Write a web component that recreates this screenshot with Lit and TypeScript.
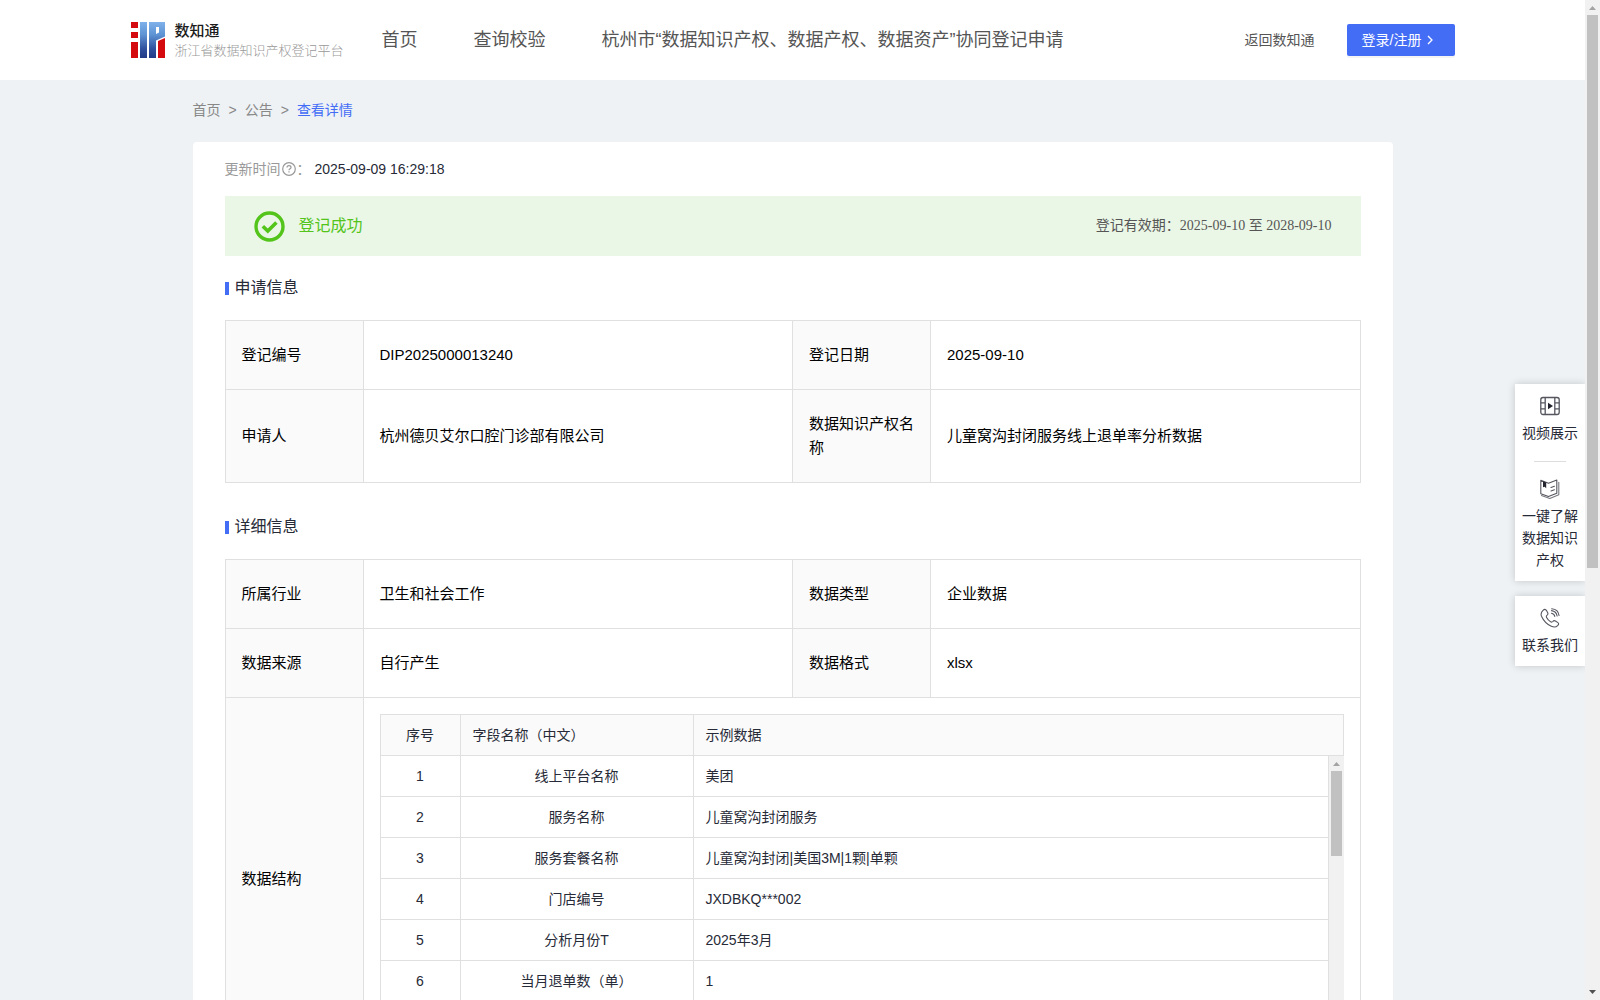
import { LitElement, html, css, svg, nothing } from "lit";
import { customElement } from "lit/decorators.js";
import { styleMap } from "lit/directives/style-map.js";

const navLinks = [
  "首页",
  "查询校验",
  "杭州市“数据知识产权、数据产权、数据资产”协同登记申请",
];

const fields: [string, string][] = [
  ["线上平台名称", "美团"],
  ["服务名称", "儿童窝沟封闭服务"],
  ["服务套餐名称", "儿童窝沟封闭|美国3M|1颗|单颗"],
  ["门店编号", "JXDBKQ***002"],
  ["分析月份T", "2025年3月"],
  ["当月退单数（单）", "1"],
];

const logo = svg`
  <defs>
    <linearGradient id="blue" x1="0" y1="0" x2="0" y2="36" gradientUnits="userSpaceOnUse">
      <stop offset="0" stop-color="#7fb2ea" />
      <stop offset=".35" stop-color="#5e93d4" />
      <stop offset=".75" stop-color="#2f4f9c" />
      <stop offset="1" stop-color="#223b86" />
    </linearGradient>
  </defs>
  <path fill="#d40a0e" d="M0 0h7v6H0zM0 10h7v6H0zM0 20h7v16H0zM27 19l7-3v20h-7z" />
  <path fill="url(#blue)" d="M9 0h7v36H9z" />
  <path fill="url(#blue)" fill-rule="evenodd" d="M18 0h16v14.500l-9 4V36h-7zM25 5v7l3-1.500V5z" />`;

const filmIcon = svg`
  <g fill="none" stroke="#55565f" stroke-width="1.300">
    <rect x=".8" y="1.500" width="18.400" height="17" rx="2.200" />
    <path d="M5.200 1.500v17M14.800 1.500v17M.8 6.800h4.400M.8 12.800h4.400M14.800 6.800h4.400M14.800 12.800h4.400" />
  </g>
  <path fill="#22232d" d="M8 6.800l5 3.200-5 3.200z" />`;

const bookIcon = svg`
  <g fill="none" stroke="#55565f" stroke-width="1.100" stroke-linejoin="round" stroke-linecap="round">
    <path d="M.8 1.200L8.500 4.300 16.800 1v13.200L8.500 17.600.8 14.800z" />
    <path stroke="#77787f" d="M18.800 3.200v12.600L9.800 19.400 1.500 16.600" />
    <path d="M11 8.500l3.400-1.300M11 12l3.400-1.300" />
  </g>
  <path fill="#22232d" d="M3 2.200l3.200 1.300v5.800L4.600 7.800 3 8.300z" />`;

const phoneIcon = svg`
  <g fill="none" stroke="#55565f" stroke-width="1.100" stroke-linecap="round" stroke-linejoin="round">
    <path d="M3 2.400C4.500 1 5.500 1 6.500 2.600l1.200 2.200c.6 1.200.2 1.800-.8 2.600-.8.700-.8 1.200-.3 2.200 1 1.900 2.300 3.200 4 4.200 1 .5 1.500.5 2.200-.3.800-1 1.500-1.200 2.600-.5l2.200 1.400c1.400 1 1.300 1.900 0 3.300-1.500 1.500-3.600 1.800-6.300.6C6.800 16.300 3.400 12.500 1.500 8.300.5 5.800 1.300 4 3 2.400z" />
    <path d="M11.500 5.200c1.900.3 3 1.500 3.300 3.200M11.500 2.600c3 .4 5.100 2.400 5.600 5.400M11.700 .8c4 .3 6.900 3 7.300 6.700" />
  </g>`;

@customElement("side-item")
class SideItem extends LitElement {
  static properties = { icon: { attribute: false }, label: {} };
  declare icon: unknown;
  declare label: string;
  static styles = css`
    :host { display: block; }
    .item {
      display: flex;
      flex-direction: column;
      align-items: center;
      gap: 6px;
      color: #272a37;
      text-decoration: none;
      text-align: center;
    }
    svg { display: block; width: 20px; height: 20px; }
  `;
  render() {
    return html`<a class="item" href="#">
      <svg viewBox="0 0 20 20" aria-hidden="true">${this.icon}</svg>
      <span>${this.label}</span>
    </a>`;
  }
}

/** Vertical scroll bar with arrows; size is the thumb's share of the track in percent. */
@customElement("scroll-rail")
class ScrollRail extends LitElement {
  static properties = { size: { type: Number } };
  declare size: number;
  static styles = css`
    :host { display: block; flex: none; width: 15px; background: #f1f1f1; }
    .rail { display: flex; flex-direction: column; height: 100%; }
    svg { display: block; flex: none; width: 15px; height: 15px; }
    .track { flex: 1; padding: 0 2px; }
    .thumb { background: #c1c1c1; }
  `;
  render() {
    return html`<div class="rail" aria-hidden="true">
      <svg viewBox="0 0 15 15"><path fill="#a3a3a3" d="M4 10l3.500-4L11 10z" /></svg>
      <div class="track"><div class="thumb" style=${styleMap({ height: `${this.size}%` })}></div></div>
      <svg viewBox="0 0 15 15"><path fill="#505050" d="M4 5l3.500 4L11 5z" /></svg>
    </div>`;
  }
}

@customElement("app-root")
class AppRoot extends LitElement {
  static styles = css`
    :host {
      display: flex;
      position: relative;
      height: 100vh;
      overflow: hidden;
      background: #eef2f5;
      color: #272a37;
      font-family: "Liberation Sans", "Noto Sans CJK SC", sans-serif;
      font-size: 14px;
      line-height: 22px;
    }
    * { box-sizing: border-box; }
    a { color: inherit; text-decoration: none; }
    .page { flex: 1; min-width: 0; overflow-y: auto; scrollbar-width: none; }
    .header { background: #fff; }
    .header-inner {
      display: flex;
      align-items: center;
      max-width: 1324px;
      height: 80px;
      margin: 0 auto;
    }
    .brand { display: flex; align-items: center; gap: 10px; }
    .brand svg { width: 34px; height: 36px; }
    .brand-text {
      display: flex;
      flex-direction: column;
      font-family: "Noto Sans CJK SC", sans-serif;
      line-height: 20px;
    }
    .brand-name { color: #1c1c1c; font-size: 15px; font-weight: 500; }
    .brand-sub { color: #999; font-size: 13px; font-weight: 300; white-space: nowrap; }
    .nav {
      display: flex;
      gap: 56px;
      margin-left: 38px;
      color: #555;
      font-size: 18px;
      white-space: nowrap;
    }
    .actions {
      display: flex;
      align-items: center;
      gap: 32px;
      margin-left: auto;
      color: #555;
      white-space: nowrap;
    }
    .login {
      display: flex;
      align-items: center;
      gap: 4px;
      width: 108px;
      height: 32px;
      padding: 0 15px;
      border: 0;
      border-radius: 2px;
      background: #446df6;
      box-shadow: 0 2px 0 rgba(0, 0, 0, 0.045);
      color: #fff;
      font: inherit;
    }
    .login svg { width: 10px; height: 10px; }
    .content { max-width: 1200px; margin: 0 auto; padding-bottom: 40px; }
    .crumbs { display: flex; gap: 8px; padding: 19px 0 21px; color: #888; }
    .crumbs .current { color: #446df6; }
    .card { padding: 16px 32px 32px; border-radius: 4px; background: #fff; }
    .updated { display: flex; align-items: center; color: #999; }
    .updated svg { width: 14px; height: 14px; margin: 0 1px; }
    .updated time { margin-left: 4px; color: #272a37; }
    .banner {
      display: flex;
      align-items: center;
      gap: 14px;
      height: 60px;
      margin-top: 16px;
      padding: 0 29px;
      background: #ebf7e6;
      color: #52c41a;
      font-size: 16px;
    }
    .banner svg { width: 31px; height: 31px; }
    .validity {
      margin-left: auto;
      color: #555;
      font-family: "Liberation Serif", "Noto Sans CJK SC", serif;
      font-size: 14px;
    }
    .title {
      display: flex;
      align-items: center;
      gap: 6px;
      margin: 21px 0;
      font-size: 16px;
      font-weight: 400;
    }
    .title::before { content: ""; width: 4px; height: 13px; background: #446df6; }
    .info + .title { margin-top: 33px; }
    .info, .fields { width: 100%; border-collapse: collapse; table-layout: fixed; }
    .info { color: #000; font-size: 15px; line-height: 24px; }
    .info > tbody > tr > * { padding: 22px 16px; border: 1px solid #e0e0e0; text-align: left; font-weight: 400; }
    .info > tbody > tr > th { background: #fafafa; }
    .info > tbody > tr > .holder { padding: 16px; }
    .key { width: 138px; }
    .fields { color: #272a37; font-size: 14px; line-height: 22px; }
    .fields th, .fields td {
      height: 41px;
      padding: 0 12px;
      border: 1px solid #e0e0e0;
      font-weight: 400;
      text-align: left;
    }
    .fields thead th { background: #fafafa; }
    .fields thead th:first-child, .fields td:nth-child(-n + 2) { text-align: center; }
    .scroller { display: flex; height: 287px; }
    .rows { flex: 1; min-width: 0; overflow-y: auto; scrollbar-width: none; }
    .rows .fields tr:first-child td { height: 40px; border-top: 0; }
    .col-no { width: 80px; }
    .col-name { width: 233px; }
    .side {
      position: absolute;
      top: 384px;
      right: 15px;
      display: flex;
      flex-direction: column;
      gap: 15px;
      width: 70px;
    }
    .side-box {
      padding: 12px 6px 10px;
      background: #fff;
      box-shadow: 0 0 8px rgba(0, 0, 0, 0.18);
      clip-path: inset(-12px 0 -12px -12px);
    }
    .rule { width: 32px; height: 1px; margin: 17px auto; border: 0; background: #ddd; }
  `;

  connectedCallback() {
    super.connectedCallback();
    this.lang = "zh-CN";
  }

  private cols() {
    return html`<colgroup><col class="col-no" /><col class="col-name" /><col /></colgroup>`;
  }

  private infoRow(cells: string[]) {
    return html`<tr>
      ${cells.map((c, i) => (i % 2 ? html`<td>${c}</td>` : html`<th scope="row">${c}</th>`))}
    </tr>`;
  }

  private infoTable(rows: string[][], extra: unknown = nothing) {
    return html`<table class="info">
      <colgroup><col class="key" /><col /><col class="key" /><col /></colgroup>
      <tbody>${rows.map((r) => this.infoRow(r))}${extra}</tbody>
    </table>`;
  }

  private structure() {
    return html`<tr>
      <th scope="row">数据结构</th>
      <td class="holder" colspan="3">
        <table class="fields">
          ${this.cols()}
          <thead><tr><th scope="col">序号</th><th scope="col">字段名称（中文）</th><th scope="col">示例数据</th></tr></thead>
        </table>
        <div class="scroller">
          <div class="rows">
            <table class="fields">
              ${this.cols()}
              <tbody>
                ${fields.map(([n, v], i) => html`<tr><td>${i + 1}</td><td>${n}</td><td>${v}</td></tr>`)}
              </tbody>
            </table>
          </div>
          <scroll-rail size="33"></scroll-rail>
        </div>
      </td>
    </tr>`;
  }

  render() {
    return html`
      <div class="page">
        <header class="header">
          <div class="header-inner">
            <a class="brand" href="#">
              <svg viewBox="0 0 34 36" aria-hidden="true">${logo}</svg>
              <span class="brand-text">
                <span class="brand-name">数知通</span>
                <span class="brand-sub">浙江省数据知识产权登记平台</span>
              </span>
            </a>
            <nav class="nav">${navLinks.map((l) => html`<a href="#">${l}</a>`)}</nav>
            <div class="actions">
              <a href="#">返回数知通</a>
              <button class="login" type="button">
                登录/注册
                <svg viewBox="0 0 10 10" aria-hidden="true"><path d="M3 1l4 4-4 4" fill="none" stroke="#fff" stroke-width="1.300" /></svg>
              </button>
            </div>
          </div>
        </header>
        <main class="content">
          <nav class="crumbs">
            <a href="#">首页</a><span>&gt;</span><a href="#">公告</a><span>&gt;</span><a class="current" href="#">查看详情</a>
          </nav>
          <section class="card">
            <div class="updated">
              <span>更新时间</span>
              <svg viewBox="0 0 14 14" aria-hidden="true">
                <g fill="none" stroke="#999" stroke-width="1.200">
                  <circle cx="7" cy="7" r="6.300" />
                  <path d="M5 5.600c0-1.200.9-1.900 2-1.900s2 .7 2 1.700c0 1.300-2 1.400-2 2.800" />
                  <path d="M7 9.200v1.300" />
                </g>
              </svg>
              <span>：</span>
              <time>2025-09-09 16:29:18</time>
            </div>
            <div class="banner">
              <svg viewBox="0 0 31 31" aria-hidden="true">
                <circle cx="15.500" cy="15.500" r="13.500" fill="none" stroke="#52c41a" stroke-width="3.400" />
                <path d="M8.800 15.300l5 4.800 8.600-8.600" fill="none" stroke="#52c41a" stroke-width="3.600" />
              </svg>
              <span>登记成功</span>
              <span class="validity">登记有效期：2025-09-10 至 2028-09-10</span>
            </div>
            <h2 class="title">申请信息</h2>
            ${this.infoTable([
              ["登记编号", "DIP2025000013240", "登记日期", "2025-09-10"],
              ["申请人", "杭州德贝艾尔口腔门诊部有限公司", "数据知识产权名称", "儿童窝沟封闭服务线上退单率分析数据"],
            ])}
            <h2 class="title">详细信息</h2>
            ${this.infoTable(
              [
                ["所属行业", "卫生和社会工作", "数据类型", "企业数据"],
                ["数据来源", "自行产生", "数据格式", "xlsx"],
              ],
              this.structure(),
            )}
          </section>
        </main>
      </div>
      <scroll-rail size="57"></scroll-rail>
      <aside class="side">
        <div class="side-box">
          <side-item .icon=${filmIcon} label="视频展示"></side-item>
          <hr class="rule" />
          <side-item .icon=${bookIcon} label="一键了解数据知识产权"></side-item>
        </div>
        <div class="side-box">
          <side-item .icon=${phoneIcon} label="联系我们"></side-item>
        </div>
      </aside>
    `;
  }
}
